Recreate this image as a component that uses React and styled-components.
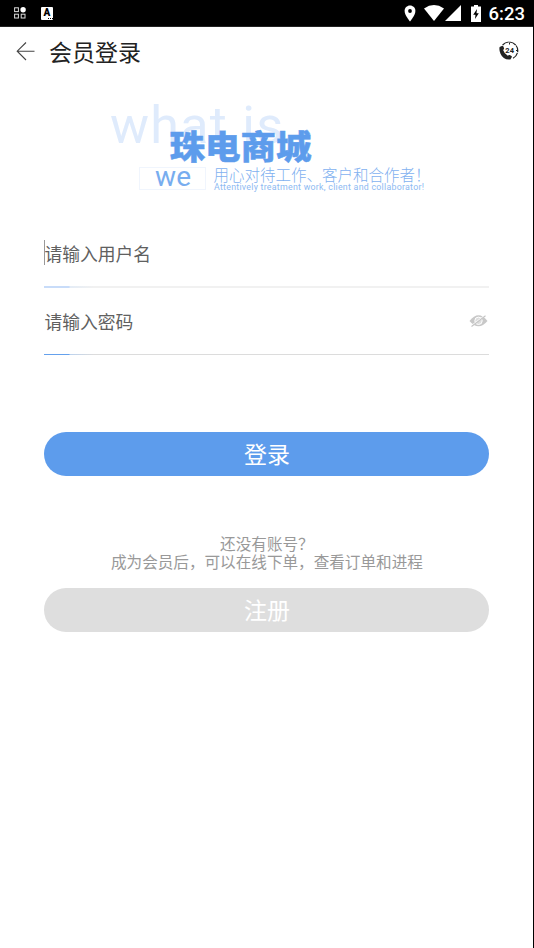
import React, { useState } from "react";
import styled, { createGlobalStyle } from "styled-components";

function App() {
  const [user, setUser] = useState("");
  const [password, setPassword] = useState("");
  const [visible, setVisible] = useState(false);

  return (
    <Page>
      <GlobalStyle />
      <StatusBar />
      <Header>
        <IconButton aria-label="back">
          <BackIcon />
        </IconButton>
        <Title>会员登录</Title>
        <IconButton aria-label="service">
          <ServiceIcon />
        </IconButton>
      </Header>
      <Logo />
      <Form onSubmit={(e) => e.preventDefault()}>
        <Field $soft>
          <Caret />
          <Input
            placeholder="请输入用户名"
            value={user}
            onChange={(e) => setUser(e.target.value)}
          />
        </Field>
        <Field>
          <Input
            placeholder="请输入密码"
            type={visible ? "text" : "password"}
            value={password}
            onChange={(e) => setPassword(e.target.value)}
          />
          <IconButton type="button" onClick={() => setVisible(!visible)}>
            <EyeIcon />
          </IconButton>
        </Field>
        <Button $color="#5d9cec">登录</Button>
        <Hint>
          还没有账号？
          <br />
          成为会员后，可以在线下单，查看订单和进程
        </Hint>
        <Button type="button" $color="#dedede">
          注册
        </Button>
      </Form>
    </Page>
  );
}

function StatusBar() {
  return (
    <Bar>
      <svg width="12" height="12" viewBox="0 0 12 12" fill="none" stroke="#ddd">
        <rect x="0.6" y="0.8" width="3.8" height="3.8" />
        <rect x="0.6" y="7.2" width="3.8" height="3.8" />
        <rect x="7.2" y="7.2" width="3.8" height="3.8" />
        <circle cx="9.1" cy="2.8" r="2.7" fill="#fff" stroke="none" />
      </svg>
      <AppBadge>
        <span>A</span>
        <svg width="5" height="1" viewBox="0 0 5 1">
          <path d="M0 .5h5" stroke="#000" strokeDasharray="1 1" />
        </svg>
      </AppBadge>
      <Spacer />
      <svg width="12" height="17" viewBox="0 0 12 17">
        <path
          d="M6 .5C2.9.5.6 2.9.6 5.9.6 10 6 16.5 6 16.5s5.4-6.5 5.4-10.6C11.4 2.9 9.1.5 6 .5Z"
          fill="#fff"
        />
        <circle cx="6" cy="6" r="1.9" />
      </svg>
      <Wifi width="20" height="16" viewBox="0 0 20 16">
        <path d="M0 3.5Q10-3.3 20 3.5L10 16Z" fill="#fff" />
      </Wifi>
      <Signal width="16" height="16" viewBox="0 0 16 16">
        <path d="M16 0v16H0Z" fill="#fff" />
      </Signal>
      <Battery width="10" height="17" viewBox="0 0 10 17">
        <path d="M3 0h4v1.5h3V17H0V1.5h3Z" fill="#fff" />
        <path d="M6 4 2.2 9.8h2.3L4 14l3.8-5.7H5.5Z" />
      </Battery>
      <Time>6:23</Time>
    </Bar>
  );
}

function BackIcon() {
  return (
    <svg width="20" height="20" viewBox="0 0 20 20" fill="none" stroke="#444">
      <path d="M1 10.2H18.5M10 1.5 1.2 10.2 10 19" strokeWidth="1.1" />
    </svg>
  );
}

function ServiceIcon() {
  return (
    <svg width="20" height="20" viewBox="0 0 20 20" fill="none">
      <path
        d="M3.6 4A8.600 8.600 0 1 1 13.500 17.500"
        stroke="#222"
        strokeWidth="1.2"
        strokeDasharray="7 .7"
      />
      <path d="M10.500 1.500v2M17 9.500h2" stroke="#222" />
      <path
        d="M.6 6 2.900 4.900q1-.4 1.500.6l.7 1.800q.2.900-1 1.700 1.100 3.600 4.700 5.700 1-1 1.900-.7l1.800 1q.7.600.1 1.500l-1.200 1.900Q4.300 19.200 1.500 12.700-.1 9.100.6 6Z"
        fill="#222"
      />
      <DayText x="6.200" y="12" textLength="8.800">
        24
      </DayText>
    </svg>
  );
}

function EyeIcon() {
  return (
    <svg width="20" height="14" viewBox="0 0 20 14" fill="none">
      <path d="M.5 7Q9.500-4.500 18.500 7 9.500 17.500.5 7Z" fill="#c8c8c8" />
      <circle cx="9.500" cy="6.800" r="3.700" fill="#ddd" stroke="#fff" />
      <path d="M3.200 11.300 16 1.500" stroke="#fff" strokeWidth="1.500" />
      <path d="M2.500 12.500 16.500 1.800" stroke="#c4c4c4" strokeWidth="1.100" />
    </svg>
  );
}

function Logo() {
  return (
    <LogoArt viewBox="0 0 320 100" width="320" height="100">
      <text className="what" x="1" y="48" textLength="173">
        what is
      </text>
      <text
        className="name"
        x="60.500"
        textLength="142"
        transform="translate(0 63.500) scale(1 .93)"
      >
        珠电商城
      </text>
      <rect x="30.500" y="72.500" width="66" height="22" />
      <text className="we" x="46" y="91" textLength="36">
        we
      </text>
      <text className="slogan" x="104.500" y="85.500">
        用心对待工作、客户和合作者！
      </text>
      <text className="english" x="105" y="95" textLength="210">
        Attentively treatment work, client and collaborator!
      </text>
    </LogoArt>
  );
}

const GlobalStyle = createGlobalStyle`
  * {
    box-sizing: border-box;
  }

  body {
    margin: 0;
    background: #fff;
    font-family: "Noto Sans CJK SC", sans-serif;
  }
`;

const Page = styled.div`
  display: flex;
  flex-direction: column;
  height: 100vh;
  border-right: 1px solid #000;
  background: #fff;
`;

const Bar = styled.div`
  display: flex;
  align-items: center;
  height: 27px;
  flex-shrink: 0;
  padding: 0 8px 0 14px;
  background: #000;
  border-bottom: 1px solid #222;
`;

const AppBadge = styled.div`
  display: flex;
  flex-direction: column;
  align-items: center;
  width: 12px;
  height: 13px;
  margin-left: 15px;
  border-radius: 1px;
  background: #fff;
  color: #000;
  font: 900 10px/11px Roboto, sans-serif;

  svg {
    align-self: flex-end;
  }
`;

const Spacer = styled.div`
  flex: 1;
`;

const Wifi = styled.svg`
  margin-left: 8px;
`;

const Signal = styled.svg`
  margin-left: 1px;
`;

const Battery = styled.svg`
  margin-left: 10px;
`;

const Time = styled.span`
  margin-left: 8px;
  padding-top: 2px;
  color: #fff;
  font: 500 18.5px/26px Roboto, sans-serif;
`;

const Header = styled.header`
  display: flex;
  align-items: center;
  height: 48px;
  padding: 0 14px 0 16px;
`;

const Title = styled.h1`
  flex: 1;
  margin: 0 0 0 13px;
  color: #222;
  font-size: 23px;
  font-weight: 400;
  line-height: 48px;
`;

const IconButton = styled.button`
  display: flex;
  padding: 0;
  border: 0;
  background: none;
`;

const DayText = styled.text`
  fill: #222;
  font: 700 7.5px Roboto, sans-serif;
`;

const LogoArt = styled.svg`
  margin: 20px 0 0 109px;
  fill: #5d9cec;
  overflow: visible;

  rect {
    fill: none;
    stroke: #f0f5fd;
  }

  .what {
    fill: #dfebfc;
    font: 400 52px Roboto, sans-serif;
  }

  .name {
    font-size: 35.5px;
    font-weight: 900;
    stroke: #5d9cec;
    stroke-width: 0.5px;
  }

  .we {
    fill: #78adef;
    font: 400 28px Roboto, sans-serif;
  }

  .slogan {
    fill: #7fb1f0;
    font-size: 15.5px;
    font-weight: 300;
  }

  .english {
    fill: #8dbaf2;
    font: 400 8.8px Roboto, sans-serif;
  }
`;

const Form = styled.form`
  display: flex;
  flex-direction: column;
  margin: 24px 43.6px 0 44.4px;
`;

const Field = styled.div`
  position: relative;
  display: flex;
  align-items: center;
  height: ${(props) => (props.$soft ? "69px" : "67px")};
  padding-bottom: 2px;
  background: linear-gradient(
      90deg,
      ${(props) => (props.$soft ? "#c8dcf9" : "#65a1ed")} 25px,
      ${(props) => (props.$soft ? "#e4ecf6" : "#bcd2ee")} 26px,
      ${(props) => (props.$soft ? "#f1f1f1" : "#dcdcdc")} 50px
    )
    bottom / 100% ${(props) => (props.$soft ? "2px" : "1px")} no-repeat;
`;

const Caret = styled.span`
  position: absolute;
  left: 0;
  top: 21px;
  width: 1px;
  height: 25px;
  background: #999;
`;

const Input = styled.input`
  flex: 1;
  min-width: 0;
  padding: 0;
  border: 0;
  outline: 0;
  background: none;
  color: #555;
  font: 17.8px/30px "Noto Sans CJK SC", sans-serif;

  &::placeholder {
    color: #606060;
    opacity: 1;
  }
`;

const Button = styled.button`
  height: 44px;
  padding: 0 0 1px;
  border: 0;
  border-radius: 22px;
  background: ${(props) => props.$color};
  color: #fff;
  font: 23px/43px "Noto Sans CJK SC", sans-serif;

  ${Field} + & {
    margin-top: 77px;
  }
`;

const Hint = styled.p`
  margin: 58px 0 18px;
  color: #999;
  font-size: 15.6px;
  line-height: 18px;
  text-align: center;
  white-space: nowrap;
`;

export default App;
